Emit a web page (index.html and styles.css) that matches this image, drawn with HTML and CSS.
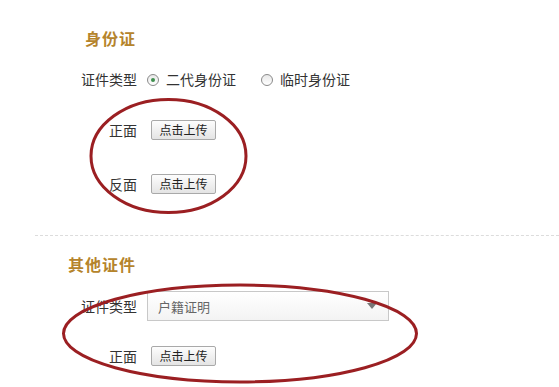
FILE: index.html
```html
<!DOCTYPE html>
<html lang="zh-CN">
<head>
<meta charset="utf-8">
<link rel="stylesheet" href="styles.css">
</head>
<body>
<div class="page">
  <section class="card card-id">
    <h2 class="title title-id">身份证</h2>
    <div class="row row-type">
      <span class="label">证件类型</span>
      <span class="radio checked"></span><span class="radio-text">二代身份证</span>
      <span class="radio radio-second"></span><span class="radio-text">临时身份证</span>
    </div>
    <div class="row row-front">
      <span class="label">正面</span>
      <span class="btn">点击上传</span>
    </div>
    <div class="row row-back">
      <span class="label">反面</span>
      <span class="btn">点击上传</span>
    </div>
  </section>
  <div class="divider"></div>
  <section class="card card-other">
    <h2 class="title title-other">其他证件</h2>
    <div class="row row-select">
      <span class="label">证件类型</span>
      <div class="select"><span class="select-text">户籍证明</span><span class="caret"></span></div>
    </div>
    <div class="row row-front2">
      <span class="label">正面</span>
      <span class="btn">点击上传</span>
    </div>
  </section>
  <svg class="marks" width="559" height="387" viewBox="0 0 559 387">
    <ellipse cx="168.5" cy="156" rx="77.5" ry="56.5" fill="none" stroke="#9b1f22" stroke-width="3"/>
    <ellipse cx="240" cy="333.5" rx="176.5" ry="48.5" fill="none" stroke="#9b1f22" stroke-width="3"/>
  </svg>
</div>
</body>
</html>
```
FILE: styles.css
```css
html, body {
  margin: 0;
  padding: 0;
  background: #ffffff;
}
body {
  font-family: "Noto Sans CJK SC", "Noto Sans", sans-serif;
  color: #333333;
  font-size: 14px;
}
.page {
  position: relative;
  width: 559px;
  height: 387px;
  overflow: hidden;
}
.card-id {
  padding-top: 28px;
}
.title {
  margin: 0;
  height: 20px;
  line-height: 20px;
  font-size: 16px;
  font-weight: bold;
  color: #b5842c;
  letter-spacing: 1px;
}
.title-id {
  margin-left: 85px;
}
.title-other {
  margin-left: 68px;
  margin-top: 18px;
}
.row {
  display: flex;
  align-items: center;
  height: 30px;
}
.row-type { margin-top: 16px; }
.row-front { margin-top: 21px; }
.row-back { margin-top: 24px; }
.row-select { margin-top: 17px; }
.row-front2 { margin-top: 20px; }
.label {
  width: 57px;
  margin-left: 80px;
  margin-right: 10px;
  text-align: right;
  white-space: nowrap;
  line-height: 20px;
}
.radio {
  box-sizing: border-box;
  width: 12px;
  height: 12px;
  border: 1px solid #8a8a8a;
  border-radius: 50%;
  background: linear-gradient(#e8e8e8, #ffffff);
  display: flex;
  align-items: center;
  justify-content: center;
  margin-top: 2px;
}
.radio.checked::after {
  content: "";
  width: 4px;
  height: 4px;
  border-radius: 50%;
  background: #3f8f4f;
}
.radio-text {
  margin-left: 7px;
  line-height: 20px;
}
.radio-second {
  margin-left: 25px;
}
.btn {
  box-sizing: border-box;
  margin-left: 4px;
  width: 65px;
  height: 20px;
  border: 1px solid #a9a9a9;
  border-radius: 2px;
  background: linear-gradient(#fdfdfd, #e4e4e4);
  font-size: 12px;
  line-height: 18px;
  text-align: center;
  color: #222222;
}
.divider {
  margin-top: 36px;
  margin-left: 35px;
  border-top: 1px dashed #dcdcdc;
}
.select {
  box-sizing: border-box;
  width: 242px;
  height: 30px;
  border: 1px solid #c8c8c8;
  background: linear-gradient(#ffffff, #f3f3f3);
  display: flex;
  align-items: center;
  justify-content: space-between;
  padding: 0 11px 0 10px;
}
.select-text {
  font-size: 13px;
  color: #666666;
}
.caret {
  width: 0;
  height: 0;
  border-left: 5px solid transparent;
  border-right: 5px solid transparent;
  border-top: 6px solid #777777;
}
.marks {
  position: absolute;
  left: 0;
  top: 0;
  pointer-events: none;
}
```
